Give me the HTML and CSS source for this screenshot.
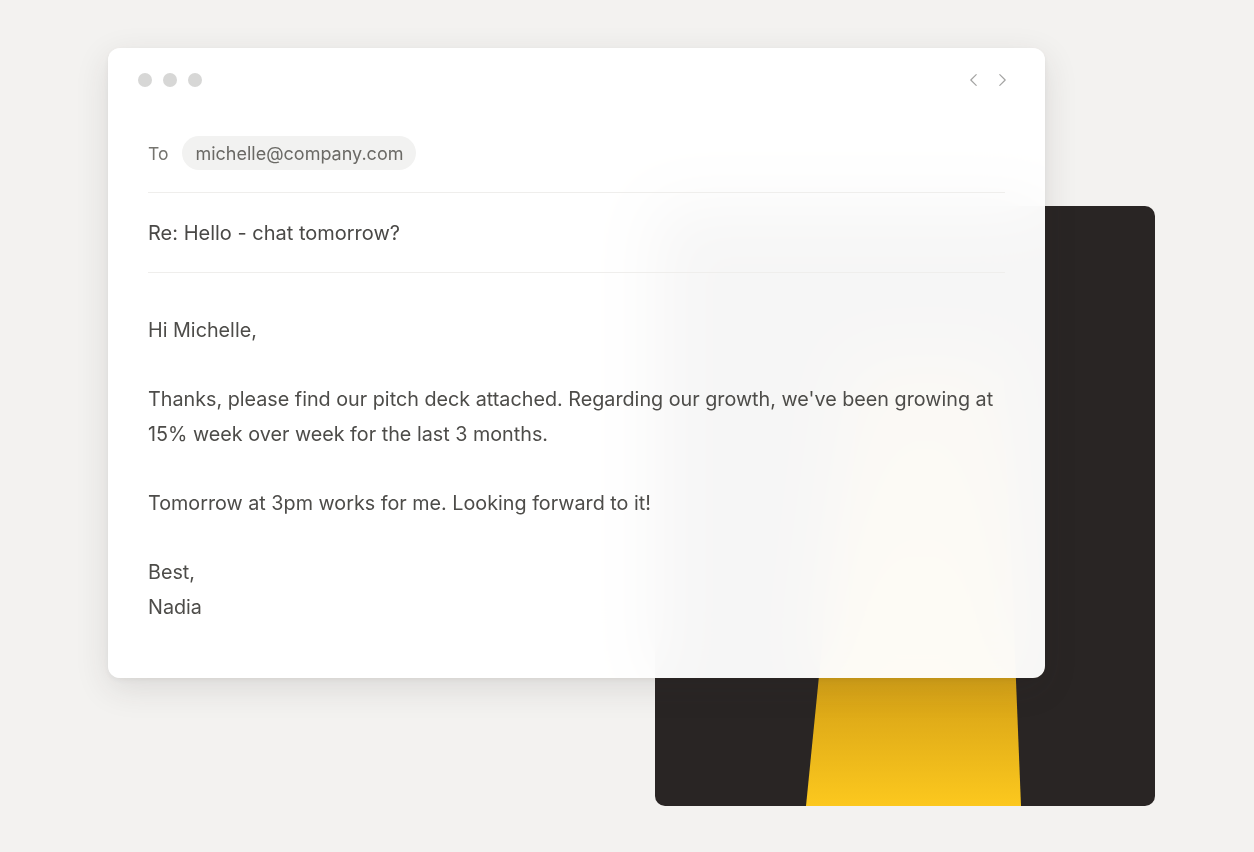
FILE: index.html
```html
<!DOCTYPE html>
<html lang="en">
<head>
<meta charset="utf-8">
<title>Email compose</title>
<link rel="stylesheet" href="styles.css">
</head>
<body>
<div class="stage">
  <div class="photo">
    <svg class="photo-art" viewBox="0 0 500 600" preserveAspectRatio="none" aria-hidden="true">
      <defs>
        <linearGradient id="road" x1="0" y1="0" x2="0" y2="1">
          <stop offset="0" stop-color="#8a6410"/>
          <stop offset="0.45" stop-color="#c08c12"/>
          <stop offset="0.79" stop-color="#deaa18"/>
          <stop offset="1" stop-color="#fcc81e"/>
        </linearGradient>
      </defs>
      <polygon points="196,150 348,150 366,600 151,600" fill="url(#road)"/>
    </svg>
  </div>

  <div class="window">
    <div class="titlebar">
      <div class="lights">
        <span class="light"></span><span class="light"></span><span class="light"></span>
      </div>
      <div class="nav">
        <svg class="chev" viewBox="0 0 10 16" aria-hidden="true"><path d="M8 2 L2 8 L8 14"/></svg>
        <svg class="chev" viewBox="0 0 10 16" aria-hidden="true"><path d="M2 2 L8 8 L2 14"/></svg>
      </div>
    </div>

    <div class="compose">
      <div class="to-row">
        <span class="to-label">To</span>
        <span class="chip">michelle@company.com</span>
      </div>
      <div class="subject">Re: Hello - chat tomorrow?</div>
      <div class="message">
        <p>Hi Michelle,</p>
        <p>Thanks, please find our pitch deck attached. Regarding our growth, we've been growing at 15% week over week for the last 3 months.</p>
        <p>Tomorrow at 3pm works for me. Looking forward to it!</p>
        <p>Best,<br>Nadia</p>
      </div>
    </div>
  </div>
</div>
</body>
</html>
```

FILE: styles.css
```css
* { box-sizing: border-box; }

html, body {
  margin: 0;
  padding: 0;
}

body {
  background: #f3f2f0;
  font-family: Inter, "Noto Sans", "Liberation Sans", sans-serif;
  color: #4a4947;
}

.stage {
  position: relative;
  width: 1254px;
  height: 852px;
  overflow: hidden;
  padding: 48px 0 0 108px;
}

.photo {
  position: absolute;
  left: 655px;
  top: 206px;
  width: 500px;
  height: 600px;
  border-radius: 10px;
  background: #292524;
  overflow: hidden;
}

.photo-art {
  display: block;
  width: 100%;
  height: 100%;
}

.window {
  position: relative;
  width: 937px;
  height: 630px;
  border-radius: 12px;
  background: rgba(255, 255, 255, 0.96);
  -webkit-backdrop-filter: blur(32px);
  backdrop-filter: blur(32px);
  box-shadow: 0 10px 34px rgba(50, 45, 40, 0.12), 0 2px 6px rgba(50, 45, 40, 0.06);
  display: flex;
  flex-direction: column;
}

.titlebar {
  display: flex;
  justify-content: space-between;
  align-items: flex-start;
  padding: 25px 38px 0 30px;
  height: 64px;
}

.lights {
  display: flex;
  gap: 11px;
}

.light {
  width: 14px;
  height: 14px;
  border-radius: 50%;
  background: #d7d7d6;
}

.nav {
  display: flex;
  gap: 20px;
  margin-top: -1px;
}

.chev {
  width: 9px;
  height: 16px;
  fill: none;
  stroke: #a3a3a2;
  stroke-width: 1.3;
  stroke-linecap: round;
  stroke-linejoin: round;
}

.compose {
  padding: 24px 40px 0;
  display: flex;
  flex-direction: column;
}

.to-row {
  display: flex;
  align-items: center;
  gap: 14px;
  padding-bottom: 22px;
  border-bottom: 1px solid #efeeec;
}

.to-label {
  font-size: 17.5px;
  color: #75746f;
}

.chip {
  height: 34px;
  padding: 0 13px;
  border-radius: 17px;
  background: #f2f2f1;
  display: inline-flex;
  align-items: center;
  font-size: 18px;
  color: #6a6965;
}

.subject {
  height: 80px;
  display: flex;
  align-items: center;
  font-size: 20px;
  color: #4a4947;
  border-bottom: 1px solid #efeeec;
}

.message {
  padding-top: 40px;
  font-size: 19.75px;
  line-height: 35px;
  color: #4d4c49;
}

.message p {
  margin: 0 0 34px;
}

.message p:last-child {
  margin-bottom: 0;
}
```
